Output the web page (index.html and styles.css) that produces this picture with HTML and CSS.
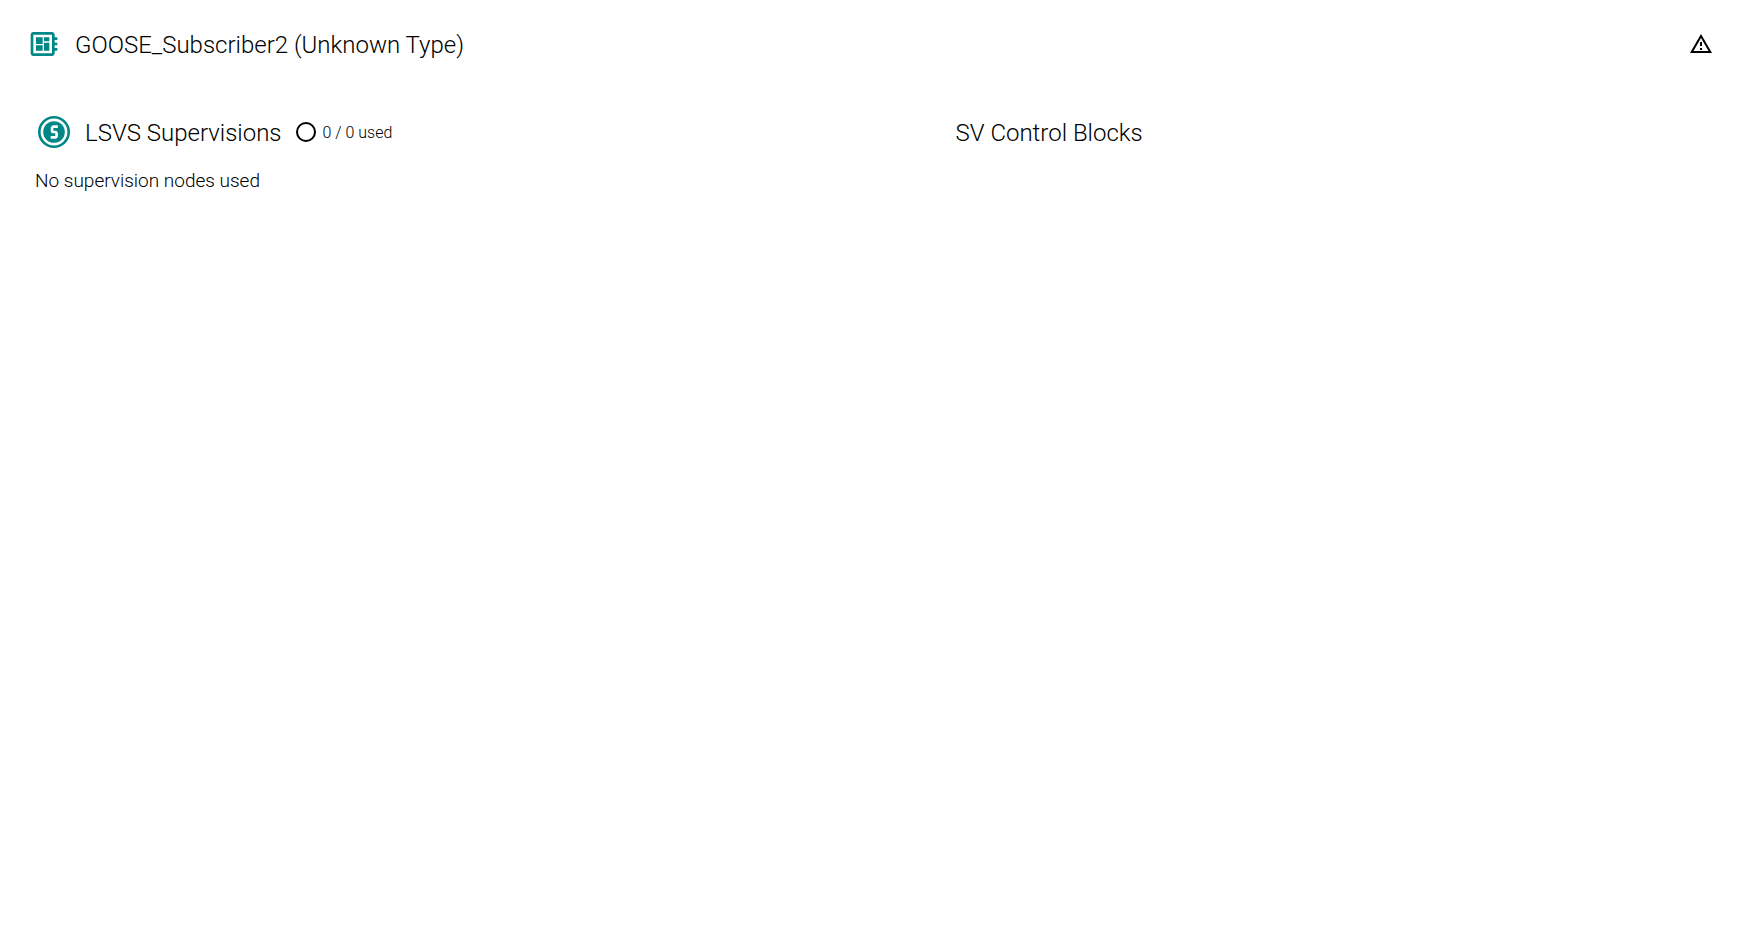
FILE: index.html
```
<!DOCTYPE html>
<html lang="en">
<head>
<meta charset="utf-8">
<meta name="viewport" content="width=device-width, initial-scale=1">
<title>Supervisions</title>
<link rel="stylesheet" href="styles.css">
</head>
<body>
<header class="header">
  <svg class="icon-large" viewBox="0 0 24 24" aria-hidden="true"><path d="M22 9V7h-2V5c0-1.1-.9-2-2-2H4c-1.1 0-2 .9-2 2v14c0 1.1.9 2 2 2h14c1.1 0 2-.9 2-2v-2h2v-2h-2v-2h2v-2h-2V9h2zm-4 10H4V5h14v14zM6 13h5v4H6v-4zm6-6h4v3h-4V7zM6 7h5v5H6V7zm6 4h4v6h-4v-6z"/></svg>
  <h1 class="title">GOOSE_Subscriber2 (Unknown Type)</h1>
  <svg class="icon-small" viewBox="0 0 24 24" role="img" aria-label="Warning"><path d="M12 5.99L19.53 19H4.47L12 5.99M12 2L1 21h22L12 2zm1 14h-2v2h2v-2zm0-6h-2v4h2v-4z"/></svg>
</header>
<main class="columns">
  <section class="column">
    <div class="heading">
      <svg class="badge" viewBox="0 0 32 32" aria-hidden="true">
        <circle class="badge-ring" cx="16" cy="16" r="14.7"/>
        <circle class="badge-disc" cx="16" cy="16" r="10.8"/>
        <path class="badge-letter" d="M19.8 10.6h-4.2a1.6 1.6 0 0 0-1.6 1.6v2.2a1.6 1.6 0 0 0 1.6 1.6h1.4a1.6 1.6 0 0 1 1.6 1.6v2.2a1.6 1.6 0 0 1-1.6 1.6H12.7"/>
      </svg>
      <h2 class="title">LSVS Supervisions</h2>
      <div class="usage">
        <svg class="icon-small" viewBox="0 0 24 24" aria-hidden="true"><circle class="usage-ring" cx="12" cy="12" r="9"/></svg>
        <span>0 / 0 used</span>
      </div>
    </div>
    <p class="message">No supervision nodes used</p>
  </section>
  <section class="column">
    <div class="heading">
      <h2 class="title">SV Control Blocks</h2>
    </div>
  </section>
</main>
</body>
</html>
```
FILE: styles.css
```
body {
  margin: 0;
  background: #fff;
  color: #000;
  font-family: Roboto, "Liberation Sans", sans-serif;
  font-weight: 300;
}

.header {
  display: flex;
  align-items: center;
  gap: 15px;
  padding: 27px 32px 27px 28px;
}

.title {
  margin: 0;
  padding-top: 2px;
  font-size: 24px;
  line-height: 32px;
  font-weight: 300;
}

.header .title {
  flex: 1;
}

.icon-large {
  width: 32px;
  height: 32px;
  fill: #018786;
}

.icon-small {
  width: 24px;
  height: 24px;
}

.columns {
  display: grid;
  grid-template-columns: 1fr 1fr;
  gap: 166px;
  padding: 27px 35px;
}

.heading {
  display: flex;
  align-items: center;
}

.badge {
  width: 32px;
  height: 32px;
  margin: 0 15px 0 3px;
}

.badge-ring {
  fill: none;
  stroke: #018786;
  stroke-width: 2.6;
}

.badge-disc {
  fill: #018786;
}

.badge-letter {
  fill: none;
  stroke: #fff;
  stroke-width: 2.6;
}

.usage {
  display: flex;
  align-items: center;
  gap: 5px;
  margin-left: 12px;
  font-size: 16px;
}

.usage-ring {
  fill: none;
  stroke: #000;
  stroke-width: 2;
}

.message {
  margin: 20px 0 0;
  font-size: 19px;
  line-height: 24px;
}
```
